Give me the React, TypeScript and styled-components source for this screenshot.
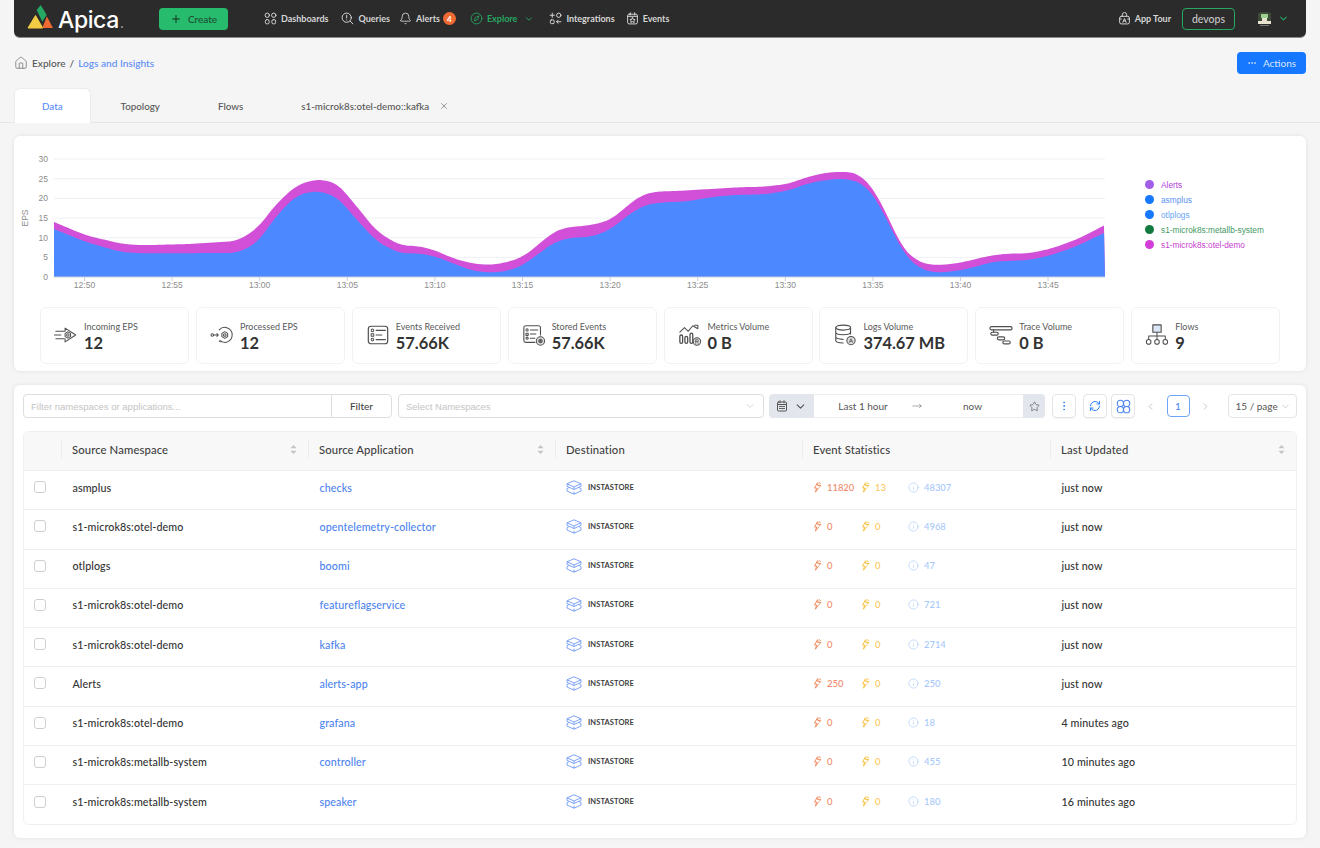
import React from "react";
import styled, { createGlobalStyle } from "styled-components";
import { Bell, ChevronDown, ChevronLeft, ChevronRight, Compass, Ellipsis, EllipsisVertical, House, Info, MoveRight, Plus, RefreshCw, Star, X } from "lucide-react";

const Global = createGlobalStyle`
  html, body { margin: 0; padding: 0; background: #f5f5f5; }
  body { font-family: "Lato", "Noto Sans", sans-serif; color: #3a3a3a; width: 1320px; height: 848px; overflow: hidden; }
  * { box-sizing: border-box; }
`;

const Page = styled.div`display: flex; flex-direction: column; width: 1320px;`;

const Nav = styled.header`
  display: flex; align-items: center; height: 38px; margin: 0 14px; padding-left: 13px;
  background: #2b2b2b; border-bottom: 1px solid #8a8a8a; border-radius: 0 0 6px 6px;
`;
const Logo = styled.div`display: flex; align-items: flex-start; gap: 4px; width: 132px; height: 37px; padding-top: 5px;`;
const LogoText = styled.span`font-family: "Inter", sans-serif; font-size: 23px; font-weight: 500; color: #fff; letter-spacing: -0.4px; line-height: 28px; margin-top: 1px;`;
const LogoDot = styled.span`color: #b0b0b0; font-size: 13px; margin-left: 1px;`;
const CreateButton = styled.button`
  display: flex; align-items: center; justify-content: center; gap: 6px; width: 69px; height: 22px; padding: 0; border: 0;
  border-radius: 4px; background: #27bb6d; color: #1f4d33; font: 500 10px "Lato", sans-serif;
`;
const NavLinks = styled.nav`display: flex; align-items: center; margin-left: 36px; gap: 14px; flex: 1;`;
const NavLink = styled.a<{ $active?: boolean; $ml?: number }>`
  display: flex; align-items: center; gap: 4px; font-size: 9px; font-weight: 700; white-space: nowrap; margin-left: ${(p) => p.$ml || 0}px;
  color: ${(p) => (p.$active ? "#27a862" : "#d6d6d6")};
`;
const Badge = styled.span`
  display: inline-flex; align-items: center; justify-content: center; width: 13px; height: 13px; margin-left: -1px;
  border-radius: 50%; background: #ee6a33; color: #fff; font-size: 8px; font-weight: 700;
`;
const NavRight = styled.div`display: flex; align-items: center; padding-right: 17px;`;
const Workspace = styled.div`
  display: flex; align-items: center; justify-content: center; width: 53px; height: 22px; margin: 0 22px 0 11px;
  border: 1px solid #27a862; border-radius: 4px; color: #c8c8c8; font-size: 10.5px; font-weight: 500;
`;
const Avatar = styled.div`display: flex; align-items: center; gap: 6px;`;

const Crumbs = styled.div`display: flex; align-items: center; justify-content: space-between; padding: 14px 14px; height: 50px;`;
const CrumbTrail = styled.div`display: flex; align-items: center; font-size: 10.1px; font-weight: 500; gap: 4px; color: #555;`;
const CrumbLink = styled.span`color: #5b8cf5;`;
const ActionsButton = styled.button`
  display: flex; align-items: center; justify-content: center; gap: 6px; width: 69px; height: 22px; border: 0; padding: 0;
  border-radius: 4px; background: #1677ff; color: #d8e6ff; font: 400 10px "Lato", sans-serif;
`;

const Tabs = styled.div`display: flex; gap: 2px; height: 35px; padding-left: 14px; border-bottom: 1px solid #e6e6e6;`;
const Tab = styled.div<{ $active?: boolean }>`
  display: flex; align-items: center; gap: 10px; height: ${(p) => (p.$active ? "35px" : "34px")}; padding: 0 27px; font-size: 9.8px; font-weight: 500;
  border: 1px solid ${(p) => (p.$active ? "#ececec" : "transparent")}; border-bottom: 0; border-radius: 6px 6px 0 0;
  background: ${(p) => (p.$active ? "#fff" : "transparent")}; color: ${(p) => (p.$active ? "#5b8cf5" : "#555")};
`;

const Card = styled.section`
  margin: 13px 14px 0; background: #fff; border-radius: 6px; box-shadow: 0 0 4px rgba(0,0,0,.09);
`;
const ChartCard = styled(Card)`height: 235px; padding-top: 14px;`;
const ChartRow = styled.div`display: flex; height: 145px;`;
const Legend = styled.ul`display: flex; flex-direction: column; gap: 0; list-style: none; margin: 0; padding: 27px 0 0 25px;`;
const LegendRow = styled.li<{ $text: string }>`
  display: flex; align-items: center; gap: 7px; height: 15px; font: 8.3px "Liberation Sans", sans-serif; color: ${(p) => p.$text};
`;
const LegendDot = styled.i<{ $color: string }>`width: 9px; height: 9px; border-radius: 50%; background: ${(p) => p.$color};`;

const Stats = styled.div`display: grid; grid-template-columns: repeat(8, 149px); gap: 6.9px; margin: 12px 0 0 26px; height: 57px;`;
const Stat = styled.div`
  display: flex; align-items: center; gap: 6px; padding-left: 13px; border: 1px solid #f2f2f2; border-radius: 6px;
`;
const StatIcon = styled.div`display: flex; width: 24px; justify-content: center; flex: none; margin-top: -2px;`;
const StatBody = styled.div`display: flex; flex-direction: column; margin-top: 4px;`;
const StatLabel = styled.span`font-size: 9px; color: #5a5a5a; line-height: 11px;`;
const StatValue = styled.span`font-size: 16.4px; font-weight: 700; color: #333; line-height: 22px;`;

const TableCard = styled(Card)`height: 453px; padding: 9px; margin-top: 14px;`;
const Filters = styled.div`display: flex; align-items: center; height: 24px;`;
const InputShell = styled.div<{ $w: number }>`
  display: flex; align-items: center; width: ${(p) => p.$w}px; height: 24px; padding: 0 7px; font-size: 9.5px; color: #c4c4c4; font-family: "Liberation Sans", sans-serif;
  border: 1px solid #dedede; border-radius: 4px 0 0 4px;
`;
const FilterButton = styled.div`
  display: flex; align-items: center; justify-content: center; width: 61px; height: 24px; margin-left: -1px; font-size: 10px; font-weight: 500; color: #444;
  border: 1px solid #dedede; border-radius: 0 4px 4px 0;
`;
const SelectBox = styled.div`
  display: flex; align-items: center; justify-content: space-between; width: 366px; height: 24px; margin: 0 5px 0 6px; padding: 0 7px 0 7px;
  border: 1px solid #dedede; border-radius: 4px; font-size: 9.5px; color: #c4c4c4; font-family: "Liberation Sans", sans-serif;
`;
const TimePicker = styled.div`
  display: flex; align-items: center; width: 276px; height: 24px; background: #e3e7ed; border-radius: 4px; overflow: hidden;
`;
const TimeAddon = styled.div<{ $w: number }>`display: flex; align-items: center; justify-content: space-evenly; width: ${(p) => p.$w}px; height: 24px; color: #555;`;
const TimeRange = styled.div`
  display: grid; grid-template-columns: 98px 10px 1fr; align-items: center; justify-items: center; width: 209px; height: 24px;
  background: #fff; font-size: 10px; color: #555; border-block: 1px solid #eee;
`;
const IconButton = styled.div<{ $mr: number; $ml?: number }>`
  display: flex; align-items: center; justify-content: center; width: 24px; height: 24px; margin: 0 ${(p) => p.$mr}px 0 ${(p) => p.$ml || 0}px;
  border: 1px solid #e4e4e4; border-radius: 4px; box-shadow: 0 1px 1px rgba(0,0,0,.04); color: #1677ff;
`;
const Pager = styled.div`display: flex; align-items: center; gap: 10.5px; margin-left: 10px; color: #c2c2c2;`;
const PageNumber = styled.div`
  display: flex; align-items: center; justify-content: center; width: 23px; height: 22px; border: 1px solid #6fa3f7; border-radius: 4px; font-size: 10px; color: #4a86f0; font-weight: 500;
`;
const PageSize = styled.div`
  display: flex; align-items: center; justify-content: space-between; width: 69px; height: 24px; margin-left: 16.5px; padding: 0 5px 0 7px;
  border: 1px solid #e4e4e4; border-radius: 4px; font-size: 10px; color: #555;
`;

const Table = styled.div`margin-top: 13px; border: 1px solid #efefef; border-radius: 6px; overflow: hidden;`;
const HeaderRow = styled.div`
  display: grid; grid-template-columns: 37px 247px 247px 247px 248px 1fr; height: 39px; align-items: center; background: #f8f8f8; border-bottom: 1px solid #eee;
`;
const HeaderCell = styled.div`
  display: flex; align-items: center; justify-content: space-between; height: 100%; padding: 0 11px 4px; font-size: 11.3px; font-weight: 500; color: #3f3f3f; letter-spacing: .1px;
  position: relative;
  &::before { content: ""; position: absolute; left: 0; top: 9px; bottom: 12px; width: 1px; background: #ececec; }
`;
const Row = styled.div`
  display: grid; grid-template-columns: 37px 247px 247px 247px 248px 1fr; height: 39.25px; padding-bottom: 6px; align-items: center; border-bottom: 1px solid #f0f0f0;
  &:last-child { border-bottom: 0; }
`;
const CheckCell = styled.div`display: flex; padding-left: 10px;`;
const CheckBox = styled.span`width: 12px; height: 12px; border: 1px solid #cfcfcf; border-radius: 3px;`;
const TextCell = styled.div`padding-left: 11.5px; font-size: 10.7px; font-weight: 500; color: #333; white-space: nowrap; letter-spacing: .1px;`;
const LinkCell = styled(TextCell)`color: #4d84ee;`;
const DestCell = styled.div`display: flex; align-items: center; gap: 6px; padding-left: 11px; font: 700 7.5px "Lato", sans-serif; color: #3d3d3d; letter-spacing: .1px;`;
const StatCell = styled.div`display: flex; align-items: center; padding-left: 11px;`;
const Metric = styled.span<{ $color: string; $w: number }>`
  display: flex; align-items: center; gap: 5px; width: ${(p) => p.$w}px; font-size: 9.4px; color: ${(p) => p.$color}; font-weight: 500; white-space: nowrap;
`;

/* Evenly resample the series, then ease it with a moving average so the area reads as a smoothed curve. */
const curve = (pts: number[][]) => {
  const sampled: number[][] = [];
  for (let x = 54, i = 0; x <= 1105; x += 2) {
    while (i < pts.length - 2 && pts[i + 1][0] < x) i++;
    const [x0, y0] = pts[i], [x1, y1] = pts[i + 1];
    sampled.push([x, y0 + ((y1 - y0) * (x - x0)) / (x1 - x0)]);
  }
  const eased = sampled.map(([x], i) => {
    const r = Math.min(4, i, sampled.length - 1 - i);
    let sum = 0;
    for (let k = i - r; k <= i + r; k++) sum += sampled[k][1];
    return [x, sum / (2 * r + 1)];
  });
  return eased.map(([x, y], i) => `${i ? "L" : "M"}${x} ${y.toFixed(2)}`).join(" ");
};
const zoomed = (pts: number[][]) => pts.map(([x, y]) => [400 + x / 2.193, 160 + y / 3]);
const blue = [[54,229],[85,241.7],[120,251.7],[140,253.3],[237,253],[257,243],[277,215],[297,195],[317,190.7],[337,196.7],[357,220],[377,241.7],
  ...zoomed([[0,280],[40,280],[75,288],[120,312],[160,333],[200,338],[240,332],[270,315],[300,285],[340,245],[380,232],[410,232],[440,222],[470,200],[500,165],[540,133],[580,127],[630,124],[680,112],[730,105],[800,103],[850,92],[900,68],[950,57],[985,57],[1020,75],[1050,130],[1080,215],[1110,290],[1140,325],[1170,338],[1210,335],[1250,325],[1300,305],[1380,300],[1430,285],[1490,255],[1557,210]])];
const pink = [[54,222],[85,235],[120,243.5],[140,245.3],[190,244],[237,241],[257,228.7],[277,203],[297,185],[317,179],[337,183],[357,206.7],[377,231.7],
  ...zoomed([[0,256],[40,258],[75,270],[120,297],[160,311],[200,315],[240,305],[270,290],[300,258],[330,222],[360,203],[400,198],[440,190],[470,172],[500,135],[530,105],[560,95],[620,92],[680,87],[740,82],[800,80],[850,72],[900,48],[940,37],[985,35],[1010,45],[1040,90],[1070,170],[1100,260],[1130,300],[1160,315],[1200,314],[1240,305],[1290,288],[1330,281],[1380,280],[1430,265],[1490,235],[1557,187]])];
const yTicks = [0, 5, 10, 15, 20, 25, 30];
const xTicks = ["12:50","12:55","13:00","13:05","13:10","13:15","13:20","13:25","13:30","13:35","13:40","13:45"];

const Chart = () => (
  <svg width="1106" height="145" viewBox="14 150 1106 145">
    {yTicks.map((v) => {
      const y = 277 - v * 3.93;
      return (
        <g key={v}>
          {v > 0 && <line x1="54" x2="1105" y1={y} y2={y} stroke="#eef0f4" />}
          <text x="48" y={y + 3} textAnchor="end" fontSize="8.5" fontFamily="Liberation Sans" fill="#8c8c8c">{v}</text>
        </g>
      );
    })}
    <text transform="translate(28 218) rotate(-90)" textAnchor="middle" fontSize="8.5" fontFamily="Liberation Sans" fill="#8c8c8c">EPS</text>
    <path d={`${curve(pink)} L1105 277 L54 277Z`} fill="#d250d8" />
    <path d={`${curve(blue)} L1105 277 L54 277Z`} fill="#4c88ff" />
    <line x1="54" x2="1105" y1="277" y2="277" stroke="#c9d0dc" />
    {xTicks.map((t, i) => {
      const x = 84.5 + i * 87.6;
      return (
        <g key={t}>
          <line x1={x} x2={x} y1="277" y2="281" stroke="#c9d0dc" />
          <text x={x} y="288" textAnchor="middle" fontSize="8.5" fontFamily="Liberation Sans" fill="#8c8c8c">{t}</text>
        </g>
      );
    })}
  </svg>
);

const ApicaMark = () => (
  <svg width="27" height="24" viewBox="0 0 27 24">
    <path d="M8.5 10.5 L15.8 23 H1Z" fill="#f4cb45" stroke="#f4cb45" strokeLinejoin="round" />
    <path d="M9.7 5 L13.7 0 L19.7 10 L15.3 16.7Z" fill="#27a862" />
    <path d="M19.9 11.5 L26 23 H15.2Z" fill="#ee6a33" />
  </svg>
);

const S = (p: { w?: number; h?: number; c?: string; children: React.ReactNode; sw?: number }) => (
  <svg width={p.w || 13} height={p.h || 13} viewBox="0 0 24 24" fill="none" stroke={p.c || "#d6d6d6"} strokeWidth={p.sw || 1.8} strokeLinecap="round" strokeLinejoin="round">{p.children}</svg>
);
const DashIcon = () => <S><circle cx="6" cy="6" r="4" /><circle cx="18" cy="6" r="4" /><rect x="2.5" y="14" width="7" height="8" rx="3" /><rect x="14.5" y="14" width="7" height="8" rx="3" /></S>;
const QueryIcon = () => <S><circle cx="10.5" cy="10.5" r="8.5" /><path d="M16.8 16.8 L22 22M10.5 6v5M10.5 14.5v.2" /></S>;
const IntegrationIcon = () => <S><path d="M6 2v8M2 6h8" /><circle cx="18" cy="6" r="4" /><rect x="2.5" y="14.5" width="7" height="7" rx="2" /><path d="M22 18H14M17 15l-3 3 3 3" /></S>;
const EventsIcon = () => <S><rect x="3" y="4" width="18" height="18" rx="3" /><path d="M8 1.5v4M16 1.5v4M3 8h18" /><path d="M12 10.5l1.6 3 3.2.4-2.3 2.2.6 3.2-3.1-1.5-3.1 1.5.6-3.2-2.3-2.2 3.2-.4Z" /></S>;
const TourIcon = () => <S><rect x="3" y="8" width="18" height="14" rx="3" /><path d="M8 8V5a4 4 0 0 1 8 0v3M9 19l3-7 3 7M10 16.5h4M3 13h3M18 13h3" /></S>;
const RobotIcon = () => (
  <svg width="15" height="15" viewBox="0 0 15 15">
    <path d="M3 1h9v1h2v8h-1v3H2v-3H1V2h2Z" fill="#3d4a38" />
    <rect x="4" y="3" width="7" height="4" fill="#9bd18f" />
    <path d="M1 10h13v3H1Z" fill="#e8e2cf" />
    <rect x="5" y="7" width="5" height="3" fill="#e8e2cf" />
    <rect x="3" y="14" width="9" height="1" fill="#777" />
  </svg>
);
const CalendarIcon = () => <S c="#555" w={12} h={12} sw={2}><rect x="3" y="4" width="18" height="18" rx="2" /><path d="M8 1.5v4M16 1.5v4M3 9h18M7 13h2M11 13h2M15 13h2M7 17h2M11 17h2M15 17h2" /></S>;
const CloverIcon = () => (
  <svg width="15" height="15" viewBox="0 0 24 24" fill="none" stroke="#4d84ee" strokeWidth="1.8">
    <circle cx="7" cy="7" r="5" /><circle cx="17" cy="7" r="5" /><circle cx="7" cy="17" r="5" /><circle cx="17" cy="17" r="5" />
  </svg>
);
const Caret = () => (
  <svg width="7" height="11" viewBox="0 0 7 11" fill="#c4c4c4"><path d="M3.5 1 L6.5 4.2 H.5Z" /><path d="M3.5 10 L6.5 6.8 H.5Z" /></svg>
);
const Bolt = ({ c }: { c: string }) => (
  <svg width="9" height="11" viewBox="0 0 9 11" fill="none" stroke={c} strokeWidth="1" strokeLinejoin="round" strokeLinecap="round">
    <path d="M4.5 .8 L1.5 6 H3.6 L2.4 10.2 L5.4 6.2" /><path d="M5 1.5 L4.6 3.4 H7.8 L6.4 5.2" /><path d="M6.4 .6 L7.4 1.8" />
  </svg>
);
const BoxIcon = () => (
  <svg width="16" height="15" viewBox="0 0 16 15" fill="none" stroke="#6f9af4" strokeWidth=".9" strokeLinejoin="round">
    <path d="M8 .8 L15 3.8 L8 7 L1 3.8Z" /><path d="M1 3.8V6.4L8 9.5L15 6.4V3.8" /><path d="M3 7.6L1 8.6V11L8 14.2L15 11V8.6L13 7.6" /><path d="M8 7V9.5M8 11.6V14.2" />
  </svg>
);

const G = (p: { children: React.ReactNode }) => (
  <svg width={26} height={26} viewBox="0 0 26 26" fill="none" stroke="#4f4f4f" strokeWidth="1.1" strokeLinecap="round" strokeLinejoin="round">{p.children}</svg>
);
const gear = (x: number, y: number, r = 3.2) => (
  <g>
    <path d={`M${x} ${y - r} L${x + r * .87} ${y - r / 2} V${y + r / 2} L${x} ${y + r} L${x - r * .87} ${y + r / 2} V${y - r / 2}Z`} />
    <circle cx={x} cy={y} r={r * .4} />
  </g>
);
const statIcons: Record<string, React.ReactNode> = {
  in: <G><path d="M2 9h9M0.5 13h7M2 17h9M12 9V5.5L23.5 13 12 20.5V17" />{gear(15, 13, 3.4)}</G>,
  proc: <G><circle cx="2.5" cy="13" r="1.4" /><path d="M4 13h5M7.5 11.5L9 13l-1.5 1.5" /><path d="M10 7.5A8 8 0 0 1 24 13a8 8 0 0 1-13 6.2M10 20l1 -1 1 1.5" />{gear(16, 13, 3.6)}</G>,
  recv: <G><rect x="2.5" y="3.5" width="21" height="19" rx="3" strokeWidth="1.3" /><circle cx="7" cy="8" r="1.4" /><rect x="5.6" y="11.6" width="2.8" height="2.8" /><circle cx="7" cy="18" r="1.4" /><path d="M11 8h10M11 13h6M11 18h10" strokeWidth="1.3" /></G>,
  stored: <G><path d="M20 13V5a2 2 0 0 0-2-2H4a2 2 0 0 0-2 2v14a2 2 0 0 0 2 2h10" strokeWidth="1.2" /><circle cx="5.5" cy="7.5" r="1.2" /><rect x="4.3" y="11" width="2.4" height="2.4" /><circle cx="5.5" cy="16.5" r="1.2" /><path d="M9 7.5h8M9 12h6M9 16.5h5" /><circle cx="20" cy="19.5" r="4.5" fill="#ddd" />{gear(20, 19.5, 2)}</G>,
  metrics: <G><path d="M2 10l5-5 4 4 5-6 5 3M18 2.5h3.5V6" /><rect x="2" y="13" width="3" height="9" rx="1.5" strokeWidth="1.4" /><rect x="7.5" y="14.5" width="3" height="7.5" rx="1.5" strokeWidth="1.4" /><rect x="13" y="11" width="3" height="11" rx="1.5" strokeWidth="1.4" /><circle cx="20.5" cy="20" r="4" fill="#ddd" /><path d="M19.2 22v-4h2a1 1 0 0 1 0 2h-2M20.8 20l1.2 2" strokeWidth=".8" /></G>,
  logs: <G><ellipse cx="11" cy="5" rx="8" ry="2.7" strokeWidth="1.2" /><path d="M3 5v14c0 1.5 3.5 2.7 8 2.7M19 5v7M3 10c0 1.5 3.5 2.7 8 2.7s8-1.2 8-2.7M3 15c0 1.5 3.5 2.7 8 2.7" strokeWidth="1.2" /><circle cx="19.5" cy="19" r="4.5" fill="#ddd" /><path d="M17.8 21l1.7-4 1.7 4M18.4 19.8h2.2" strokeWidth=".8" /></G>,
  trace: <G><rect x="1" y="4" width="24" height="3.4" rx="1.7" strokeWidth="1.3" /><rect x="2" y="10" width="8" height="3.2" rx="1.6" strokeWidth="1.3" /><rect x="9" y="15" width="8" height="3.2" rx="1.6" strokeWidth="1.3" /><rect x="15" y="19.5" width="8" height="3.2" rx="1.6" strokeWidth="1.3" /><path d="M5 7.4V10" /></G>,
  flows: <G><rect x="8.5" y="2" width="9" height="8" fill="#dbe7f7" strokeWidth="1.2" /><path d="M13 10v8M4 18v-4h18v4" /><circle cx="4" cy="20.5" r="2.5" /><circle cx="13" cy="20.5" r="2.5" /><circle cx="22" cy="20.5" r="2.5" /></G>,
};

const stats = [
  ["in", "Incoming EPS", "12"],
  ["proc", "Processed EPS", "12"],
  ["recv", "Events Received", "57.66K"],
  ["stored", "Stored Events", "57.66K"],
  ["metrics", "Metrics Volume", "0 B"],
  ["logs", "Logs Volume", "374.67 MB"],
  ["trace", "Trace Volume", "0 B"],
  ["flows", "Flows", "9"],
];
const legend = [
  ["Alerts", "#a35ee8", "#b13cd8"],
  ["asmplus", "#1677ff", "#5b94f5"],
  ["otlplogs", "#1677ff", "#6aa6f8"],
  ["s1-microk8s:metallb-system", "#137a3e", "#3f9a63"],
  ["s1-microk8s:otel-demo", "#d23fd8", "#c63fd0"],
];
const rows = [
  ["asmplus", "checks", "11820", "13", "48307", "just now"],
  ["s1-microk8s:otel-demo", "opentelemetry-collector", "0", "0", "4968", "just now"],
  ["otlplogs", "boomi", "0", "0", "47", "just now"],
  ["s1-microk8s:otel-demo", "featureflagservice", "0", "0", "721", "just now"],
  ["s1-microk8s:otel-demo", "kafka", "0", "0", "2714", "just now"],
  ["Alerts", "alerts-app", "250", "0", "250", "just now"],
  ["s1-microk8s:otel-demo", "grafana", "0", "0", "18", "4 minutes ago"],
  ["s1-microk8s:metallb-system", "controller", "0", "0", "455", "10 minutes ago"],
  ["s1-microk8s:metallb-system", "speaker", "0", "0", "180", "16 minutes ago"],
];

export default function App() {
  return (
    <Page>
      <Global />
      <Nav>
        <Logo>
          <ApicaMark />
          <LogoText>Apica<LogoDot>.</LogoDot></LogoText>
        </Logo>
        <CreateButton><Plus size={12} color="#17301f" />Create</CreateButton>
        <NavLinks>
          <NavLink><DashIcon />Dashboards</NavLink>
          <NavLink $ml={-1}><QueryIcon />Queries</NavLink>
          <NavLink $ml={-5}><Bell size={13} strokeWidth={1.6} />Alerts<Badge>4</Badge></NavLink>
          <NavLink $active><Compass size={13} strokeWidth={1.6} />Explore<ChevronDown size={10} strokeWidth={2.2} style={{ marginLeft: 3 }} /></NavLink>
          <NavLink $ml={1}><IntegrationIcon />Integrations</NavLink>
          <NavLink $ml={-3}><EventsIcon />Events</NavLink>
        </NavLinks>
        <NavRight>
          <NavLink><TourIcon />App Tour</NavLink>
          <Workspace>devops</Workspace>
          <Avatar><RobotIcon /><ChevronDown size={11} strokeWidth={2.2} color="#27a862" /></Avatar>
        </NavRight>
      </Nav>

      <Crumbs>
        <CrumbTrail>
          <House size={14} strokeWidth={1.2} color="#666" />
          <span>Explore</span><span>/</span><CrumbLink>Logs and Insights</CrumbLink>
        </CrumbTrail>
        <ActionsButton><Ellipsis size={10} />Actions</ActionsButton>
      </Crumbs>

      <Tabs>
        <Tab $active>Data</Tab>
        <Tab>Topology</Tab>
        <Tab>Flows</Tab>
        <Tab>s1-microk8s:otel-demo::kafka<X size={10} color="#888" /></Tab>
      </Tabs>

      <ChartCard>
        <ChartRow>
          <Chart />
          <Legend>
            {legend.map(([name, dot, text]) => (
              <LegendRow key={name} $text={text}><LegendDot $color={dot} />{name}</LegendRow>
            ))}
          </Legend>
        </ChartRow>
        <Stats>
          {stats.map(([icon, label, value]) => (
            <Stat key={label}>
              <StatIcon>{statIcons[icon]}</StatIcon>
              <StatBody><StatLabel>{label}</StatLabel><StatValue>{value}</StatValue></StatBody>
            </Stat>
          ))}
        </Stats>
      </ChartCard>

      <TableCard>
        <Filters>
          <InputShell $w={309}>Filter namespaces or applications...</InputShell>
          <FilterButton>Filter</FilterButton>
          <SelectBox>Select Namespaces<ChevronDown size={12} color="#c4c4c4" strokeWidth={1.4} /></SelectBox>
          <TimePicker>
            <TimeAddon $w={45}><CalendarIcon /><ChevronDown size={13} strokeWidth={2.2} /></TimeAddon>
            <TimeRange><span>Last 1 hour</span><MoveRight size={10} strokeWidth={1.2} /><span>now</span></TimeRange>
            <TimeAddon $w={22}><Star size={11} strokeWidth={1.4} /></TimeAddon>
          </TimePicker>
          <IconButton $mr={7} $ml={7}><EllipsisVertical size={12} strokeWidth={1.5} /></IconButton>
          <IconButton $mr={4}><RefreshCw size={12} strokeWidth={1.8} /></IconButton>
          <IconButton $mr={0}><CloverIcon /></IconButton>
          <Pager>
            <ChevronLeft size={11} />
            <PageNumber>1</PageNumber>
            <ChevronRight size={11} />
          </Pager>
          <PageSize>15 / page<ChevronDown size={11} color="#b5b5b5" strokeWidth={1.4} /></PageSize>
        </Filters>
        <Table>
          <HeaderRow>
            <div />
            <HeaderCell>Source Namespace<Caret /></HeaderCell>
            <HeaderCell>Source Application<Caret /></HeaderCell>
            <HeaderCell>Destination</HeaderCell>
            <HeaderCell>Event Statistics</HeaderCell>
            <HeaderCell>Last Updated<Caret /></HeaderCell>
          </HeaderRow>
          {rows.map((r) => (
            <Row key={r[1]}>
              <CheckCell><CheckBox /></CheckCell>
              <TextCell>{r[0]}</TextCell>
              <LinkCell>{r[1]}</LinkCell>
              <DestCell><BoxIcon />INSTASTORE</DestCell>
              <StatCell>
                <Metric $color="#f08a6c" $w={48}><Bolt c="#f08a5c" />{r[2]}</Metric>
                <Metric $color="#fbc75a" $w={47}><Bolt c="#f8c040" />{r[3]}</Metric>
                <Metric $color="#a6c8fb" $w={60}><Info size={11} strokeWidth={1.4} />{r[4]}</Metric>
              </StatCell>
              <TextCell>{r[5]}</TextCell>
            </Row>
          ))}
        </Table>
      </TableCard>
    </Page>
  );
}
